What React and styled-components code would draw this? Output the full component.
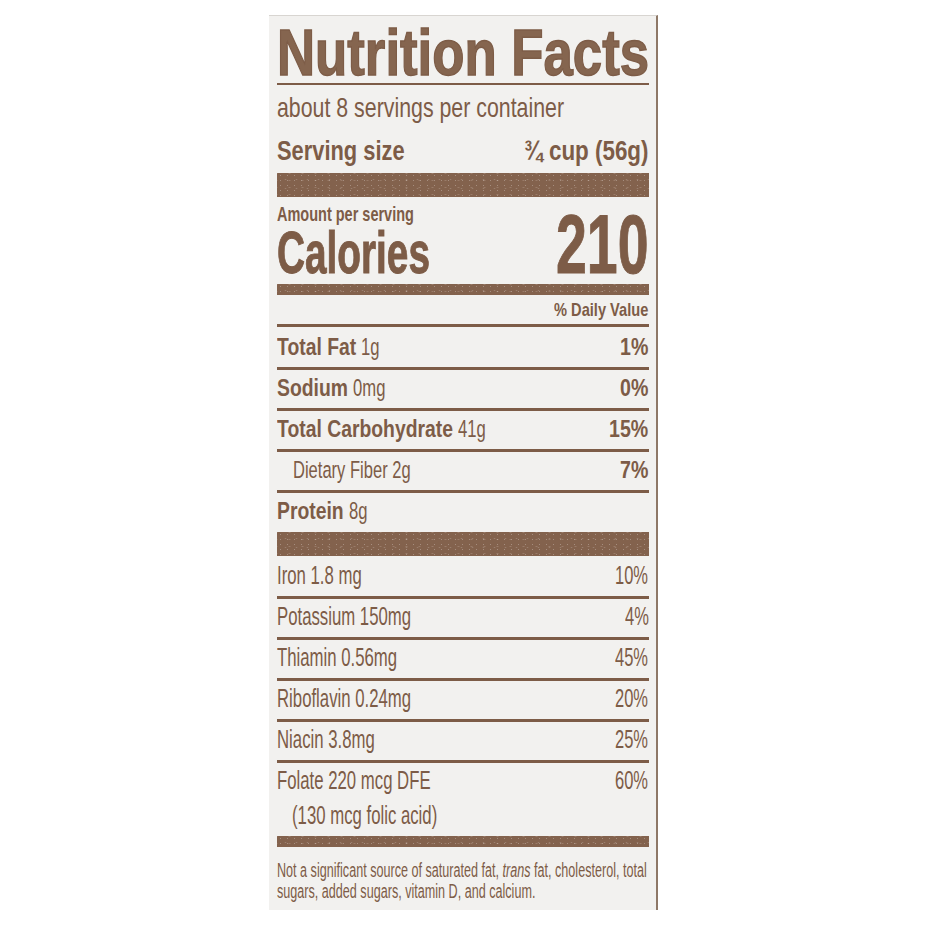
import React, { useLayoutEffect, useRef, useState } from 'react';
import styled, { createGlobalStyle } from 'styled-components';

const ink = '#7d5c47';

const GlobalStyle = createGlobalStyle`
  body {
    margin: 0;
    background: #ffffff;
    font-family: "Liberation Sans", Arial, sans-serif;
  }
`;

// condensed text: the label face is much narrower than any installed font,
// so each run is squeezed horizontally and its layout width trimmed to match
const SqBox = styled.span`
  display: inline-block;
  white-space: pre;
  transform: scaleX(${p => p.$k});
  transform-origin: left center;
`;

const Sq = ({ k = 1, children }) => {
  const ref = useRef(null);
  const [w, setW] = useState(0);
  useLayoutEffect(() => {
    const measure = () => ref.current && setW(ref.current.offsetWidth);
    measure();
    if (document.fonts) document.fonts.ready.then(measure);
  }, []);
  return (
    <SqBox ref={ref} $k={k} style={{ marginRight: -(1 - k) * w }}>
      {children}
    </SqBox>
  );
};

const Page = styled.div`
  display: flex;
  justify-content: center;
  padding-top: 15px;
`;

const Label = styled.div`
  box-sizing: border-box;
  width: 389px;
  height: 895px;
  padding: 7px 7px 0 8px;
  background: #f2f1ef;
  border-top: 1px solid #d8d5d1;
  border-right: 2px solid #8e7867;
  color: ${ink};
`;

const Title = styled.div`
  font-size: 64px;
  line-height: 60px;
  font-weight: 700;
  -webkit-text-stroke: 1.4px ${ink};
  color: #85654f;
`;

const Rule = styled.div`
  height: ${p => p.$h}px;
  margin-top: ${p => p.$mt || 0}px;
  background: ${ink};
`;

// solid band with a light grainy speckle like the printed ink
const Bar = styled.div`
  height: ${p => p.$h}px;
  margin-top: ${p => p.$mt || 0}px;
  background-color: #83624d;
  background-image:
    radial-gradient(rgba(255, 255, 255, 0.28) 0.6px, transparent 1px),
    radial-gradient(rgba(255, 255, 255, 0.18) 0.7px, transparent 1.1px),
    radial-gradient(rgba(240, 225, 210, 0.2) 0.8px, transparent 1.2px);
  background-size: 7px 5px, 11px 9px, 13px 7px;
  background-position: 0 0, 3px 2px, 6px 4px;
`;

const Servings = styled.div`
  margin-top: 8px;
  font-size: 28px;
  line-height: 30px;
`;

const ServingRow = styled.div`
  display: flex;
  justify-content: space-between;
  align-items: baseline;
  margin-top: 13px;
  font-size: 27px;
  line-height: 30px;
  font-weight: 700;
`;

const CalRow = styled.div`
  display: flex;
  justify-content: space-between;
  align-items: last baseline;
  margin-top: 6px;
  font-weight: 700;
`;

const CalLeft = styled.div`
  display: flex;
  flex-direction: column;
`;

const Amount = styled.div`
  font-size: 21px;
  line-height: 21px;
`;

const CalWord = styled.div`
  margin-top: 2px;
  font-size: 60px;
  line-height: 54px;
  -webkit-text-stroke: 1px ${ink};
`;

const CalNum = styled.div`
  font-size: 84px;
  line-height: 60px;
  -webkit-text-stroke: 1px ${ink};
`;

const DvHead = styled.div`
  margin-top: 5px;
  text-align: right;
  font-size: 19px;
  line-height: 20px;
  font-weight: 700;
`;

const Row = styled.div`
  display: flex;
  justify-content: space-between;
  align-items: baseline;
  font-size: ${p => p.$fs}px;
  line-height: 35px;
  padding: ${p => (p.$first ? 2 : 0)}px 0 3px ${p => (p.$indent ? 16 : 0)}px;
  border-bottom: ${p => (p.$open ? 'none' : `3px solid ${ink}`)};
`;

const Name = styled.span``;

const Stack = styled.div`
  display: flex;
  flex-direction: column;
`;

const SubLine = styled.div`
  padding-left: 15px;
`;

const Strong = styled.span`
  font-weight: 700;
`;

const Foot = styled.div`
  margin-top: 13px;
  font-size: 20px;
  line-height: 21px;
`;

const upper = [
  { name: 'Total Fat', amount: '1g', dv: '1%', first: true },
  { name: 'Sodium', amount: '0mg', dv: '0%' },
  { name: 'Total Carbohydrate', amount: '41g', dv: '15%' },
  { name: 'Dietary Fiber 2g', dv: '7%', indent: true },
  { name: 'Protein', amount: '8g', open: true },
];

const lower = [
  { name: 'Iron 1.8 mg', dv: '10%' },
  { name: 'Potassium 150mg', dv: '4%' },
  { name: 'Thiamin 0.56mg', dv: '45%' },
  { name: 'Riboflavin 0.24mg', dv: '20%' },
  { name: 'Niacin 3.8mg', dv: '25%' },
];

export default function App() {
  return (
    <>
      <GlobalStyle />
      <Page>
        <Label>
          <Title><Sq k={0.824}>Nutrition Facts</Sq></Title>
          <Rule $h={2} />
          <Servings><Sq k={0.762}>about 8 servings per container</Sq></Servings>
          <ServingRow>
            <Sq k={0.81}>Serving size</Sq>
            <Sq k={0.83}>¾ cup (56g)</Sq>
          </ServingRow>
          <Bar $h={24} $mt={7} />
          <CalRow>
            <CalLeft>
              <Amount><Sq k={0.69}>Amount per serving</Sq></Amount>
              <CalWord><Sq k={0.646}>Calories</Sq></CalWord>
            </CalLeft>
            <CalNum><Sq k={0.66}>210</Sq></CalNum>
          </CalRow>
          <Bar $h={11} $mt={4} />
          <DvHead><Sq k={0.77}>% Daily Value</Sq></DvHead>
          <Rule $h={3} $mt={4} />

          {upper.map(r => (
            <Row key={r.name} $fs={24.5} $first={r.first} $indent={r.indent} $open={r.open}>
              <Name>
                {r.indent ? (
                  <Sq k={0.675}>{r.name}</Sq>
                ) : (
                  <>
                    <Strong><Sq k={0.79}>{r.name + ' '}</Sq></Strong>
                    <Sq k={0.68}>{r.amount}</Sq>
                  </>
                )}
              </Name>
              {r.dv && <Strong><Sq k={0.8}>{r.dv}</Sq></Strong>}
            </Row>
          ))}

          <Bar $h={24} $mt={1} />

          {lower.map((r, i) => (
            <Row key={r.name} $fs={25} $first={i === 0}>
              <Sq k={0.67}>{r.name}</Sq>
              <Sq k={0.66}>{r.dv}</Sq>
            </Row>
          ))}
          <Row $fs={25} $open>
            <Stack>
              <Sq k={0.67}>Folate 220 mcg DFE</Sq>
              <SubLine><Sq k={0.67}>(130 mcg folic acid)</Sq></SubLine>
            </Stack>
            <Sq k={0.66}>60%</Sq>
          </Row>

          <Bar $h={11} />
          <Foot>
            <div>
              <Sq k={0.63}>Not a significant source of saturated fat, <i>trans</i> fat, cholesterol, total</Sq>
            </div>
            <div>
              <Sq k={0.63}>sugars, added sugars, vitamin D, and calcium.</Sq>
            </div>
          </Foot>
        </Label>
      </Page>
    </>
  );
}
